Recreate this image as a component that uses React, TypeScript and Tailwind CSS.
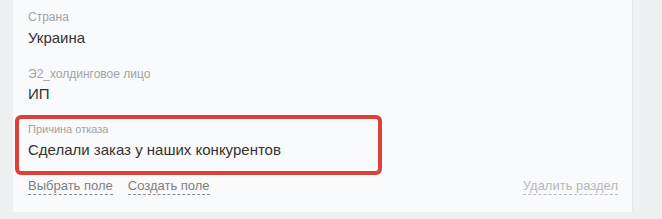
export default function App() {
  return (
    <div className="h-[219px] w-[662px] bg-[#edf1f2] font-['Liberation_Sans',Arial,sans-serif]">
      <div className="ml-[13px] h-[212px] w-[620px] border-r border-[#e6e9ea] bg-[#f9fafb] pr-[14px] pt-[9px]">
        {/* Страна */}
        <div className="pl-[15px]">
          <div className="text-[12px] leading-[16px] text-[#a3a3a3]">Страна</div>
          <div className="mt-[3px] text-[15px] leading-[20px] text-[#333]">Украина</div>
        </div>

        {/* Э2_холдинговое лицо */}
        <div className="mt-[18px] pl-[15px]">
          <div className="text-[12px] leading-[16px] text-[#a3a3a3]">Э2_холдинговое лицо</div>
          <div className="mt-[2px] text-[15px] leading-[20px] text-[#333]">ИП</div>
        </div>

        {/* Причина отказа */}
        <div className="ml-[2px] mt-[11px] h-[60px] w-[367px] rounded-[6px] border-[4px] border-[#dc4137] pl-[9px] pt-[3px]">
          <div className="text-[11px] leading-[14px] text-[#a3a3a3]">Причина отказа</div>
          <div className="mt-[4px] text-[15px] leading-[20px] text-[#333]">Сделали заказ у наших конкурентов</div>
        </div>

        {/* Действия */}
        <div className="mt-[2px] flex items-start pl-[15px] text-[13px] leading-[17px]">
          <span className="border-b border-dashed border-[#888] text-[#808080]">Выбрать поле</span>
          <span className="ml-[15px] border-b border-dashed border-[#888] text-[#808080]">Создать поле</span>
          <span className="ml-auto border-b border-dashed border-[#bbb] text-[#b8b8b8]">Удалить раздел</span>
        </div>
      </div>
    </div>
  );
}
